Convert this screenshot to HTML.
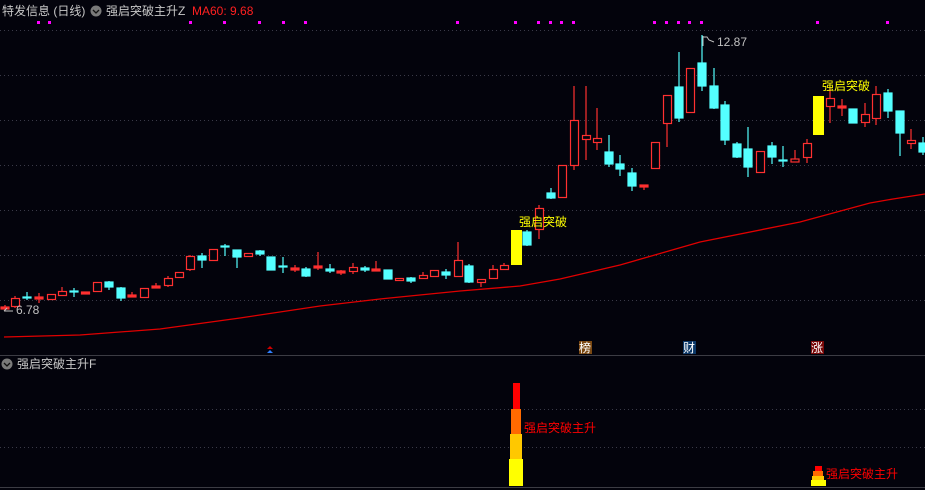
<!DOCTYPE html>
<html><head><meta charset="utf-8"><style>
html,body{margin:0;padding:0;background:#03030c;width:925px;height:490px;overflow:hidden}
svg{display:block}
text{font-family:"Liberation Sans","Noto Sans CJK SC",sans-serif}
</style></head><body>
<svg width="925" height="490" xmlns="http://www.w3.org/2000/svg">
<rect width="925" height="490" fill="#03030c"/>
<g stroke="#3a3a48" stroke-dasharray="1,3" stroke-width="1">
<line x1="0" y1="30.5" x2="925" y2="30.5"/><line x1="0" y1="75.5" x2="925" y2="75.5"/>
<line x1="0" y1="120.5" x2="925" y2="120.5"/><line x1="0" y1="165.5" x2="925" y2="165.5"/>
<line x1="0" y1="210.5" x2="925" y2="210.5"/><line x1="0" y1="255.5" x2="925" y2="255.5"/>
<line x1="0" y1="300.5" x2="925" y2="300.5"/>
<line x1="0" y1="409.5" x2="925" y2="409.5"/><line x1="0" y1="447.5" x2="925" y2="447.5"/>
</g>
<line x1="0" y1="355.5" x2="925" y2="355.5" stroke="#3c3c44"/>
<line x1="0" y1="487.5" x2="925" y2="487.5" stroke="#3c3c44"/>
<!-- magenta dots -->
<g fill="#ff00ff">
<rect x="37" y="21" width="3" height="3"/><rect x="48" y="21" width="3" height="3"/>
<rect x="189" y="21" width="3" height="3"/><rect x="223" y="21" width="3" height="3"/>
<rect x="258" y="21" width="3" height="3"/><rect x="282" y="21" width="3" height="3"/>
<rect x="304" y="21" width="3" height="3"/><rect x="456" y="21" width="3" height="3"/>
<rect x="514" y="21" width="3" height="3"/><rect x="537" y="21" width="3" height="3"/>
<rect x="549" y="21" width="3" height="3"/><rect x="560" y="21" width="3" height="3"/>
<rect x="572" y="21" width="3" height="3"/><rect x="653" y="21" width="3" height="3"/>
<rect x="665" y="21" width="3" height="3"/><rect x="677" y="21" width="3" height="3"/>
<rect x="688" y="21" width="3" height="3"/><rect x="700" y="21" width="3" height="3"/>
<rect x="816" y="21" width="3" height="3"/><rect x="886" y="21" width="3" height="3"/>
</g>
<!-- MA60 -->
<polyline fill="none" stroke="#e00000" stroke-width="1.3" points="4,337 80,335 160,329 240,318 320,306 380,299 460,291 520,286 560,279 620,265 700,242 800,222 870,203 893,199 925,194"/>
<!-- candles -->
<g stroke-width="1.2">
<g stroke="#ff3030" fill="#03030c">
<line x1="5" y1="305" x2="5" y2="311"/><rect x="1" y="307" width="8" height="2" fill="#ff3030"/>
<line x1="15" y1="296" x2="15" y2="308"/><rect x="11.5" y="298.5" width="8" height="8"/>
<line x1="39" y1="293" x2="39" y2="303"/><rect x="35" y="297" width="8" height="2" fill="#ff3030"/>
<rect x="47.5" y="294.5" width="8" height="5"/>
<line x1="62" y1="287" x2="62" y2="296"/><rect x="58.5" y="291.5" width="8" height="4"/>
<rect x="81.5" y="292" width="8" height="2" fill="#ff3030"/>
<rect x="93.5" y="282.5" width="8" height="9"/>
<line x1="132" y1="292" x2="132" y2="297"/><rect x="128" y="295" width="8" height="2" fill="#ff3030"/>
<rect x="140.5" y="288.5" width="8" height="9"/>
<line x1="156" y1="283" x2="156" y2="288"/><rect x="152" y="286" width="8" height="2" fill="#ff3030"/>
<line x1="168" y1="276" x2="168" y2="287"/><rect x="164.5" y="278.5" width="8" height="7"/>
<rect x="175.5" y="272.5" width="8" height="5"/>
<line x1="190" y1="255" x2="190" y2="271"/><rect x="186.5" y="256.5" width="8" height="13"/>
<rect x="209.5" y="249.5" width="8" height="11"/>
<rect x="244.5" y="253.5" width="8" height="3"/>
<line x1="295" y1="265" x2="295" y2="272"/><rect x="291" y="268" width="8" height="2" fill="#ff3030"/>
<line x1="318" y1="252" x2="318" y2="270"/><rect x="314" y="266" width="8" height="2" fill="#ff3030"/>
<line x1="341" y1="270" x2="341" y2="275"/><rect x="337" y="271" width="8" height="2" fill="#ff3030"/>
<line x1="353" y1="263" x2="353" y2="274"/><rect x="349.5" y="267.5" width="8" height="4"/>
<line x1="376" y1="261" x2="376" y2="271"/><rect x="372" y="269" width="8" height="2" fill="#ff3030"/>
<rect x="395.5" y="278.5" width="8" height="2"/>
<line x1="423" y1="272" x2="423" y2="279"/><rect x="419.5" y="275.5" width="8" height="3"/>
<rect x="430.5" y="270.5" width="8" height="6"/>
<line x1="458" y1="242" x2="458" y2="277"/><rect x="454.5" y="260.5" width="8" height="16"/>
<line x1="481" y1="279" x2="481" y2="287"/><rect x="477.5" y="279.5" width="8" height="3"/>
<line x1="493" y1="265" x2="493" y2="279"/><rect x="489.5" y="269.5" width="8" height="9"/>
<line x1="504" y1="263" x2="504" y2="270"/><rect x="500.5" y="265.5" width="8" height="4"/>
<line x1="539" y1="205" x2="539" y2="239"/><rect x="535.5" y="208.5" width="8" height="21"/>
<rect x="558.5" y="165.5" width="8" height="32"/>
<line x1="574" y1="86" x2="574" y2="170"/><rect x="570.5" y="120.5" width="8" height="45"/>
<line x1="586" y1="86" x2="586" y2="160"/><rect x="582.5" y="135.5" width="8" height="4"/>
<line x1="597" y1="108" x2="597" y2="150"/><rect x="593.5" y="138.5" width="8" height="4"/>
<line x1="644" y1="185" x2="644" y2="190"/><rect x="640" y="185" width="8" height="2" fill="#ff3030"/>
<rect x="651.5" y="142.5" width="8" height="26"/>
<line x1="667" y1="95" x2="667" y2="147"/><rect x="663.5" y="95.5" width="8" height="28"/>
<rect x="686.5" y="68.5" width="8" height="44"/>
<rect x="756.5" y="151.5" width="8" height="21"/>
<line x1="795" y1="150" x2="795" y2="162"/><rect x="791" y="159" width="8" height="3" />
<line x1="807" y1="139" x2="807" y2="163"/><rect x="803.5" y="143.5" width="8" height="14"/>
<line x1="830" y1="88" x2="830" y2="123"/><rect x="826.5" y="98.5" width="8" height="8"/>
<line x1="842" y1="99" x2="842" y2="116"/><rect x="838" y="106" width="8" height="2" fill="#ff3030"/>
<line x1="865" y1="103" x2="865" y2="127"/><rect x="861.5" y="114.5" width="8" height="8"/>
<line x1="876" y1="86" x2="876" y2="125"/><rect x="872.5" y="94.5" width="8" height="24"/>
<line x1="911" y1="129" x2="911" y2="149"/><rect x="907.5" y="140.5" width="8" height="3"/>
</g>
<g stroke="#54ffff" fill="#54ffff">
<line x1="27" y1="292" x2="27" y2="300"/><rect x="23" y="297" width="8" height="1"/>
<line x1="74" y1="288" x2="74" y2="297"/><rect x="70" y="291" width="8" height="1"/>
<line x1="109" y1="281" x2="109" y2="290"/><rect x="105" y="282" width="8" height="5"/>
<line x1="121" y1="287" x2="121" y2="301"/><rect x="117" y="288" width="8" height="10"/>
<line x1="202" y1="253" x2="202" y2="268"/><rect x="198" y="256" width="8" height="4"/>
<line x1="225" y1="244" x2="225" y2="256"/><rect x="221" y="246" width="8" height="1"/>
<line x1="237" y1="250" x2="237" y2="268"/><rect x="233" y="250" width="8" height="7"/>
<line x1="260" y1="250" x2="260" y2="256"/><rect x="256" y="251" width="8" height="3"/>
<rect x="267" y="257" width="8" height="13"/>
<line x1="283" y1="257" x2="283" y2="273"/><rect x="279" y="266" width="8" height="1"/>
<line x1="306" y1="267" x2="306" y2="277"/><rect x="302" y="269" width="8" height="7"/>
<line x1="330" y1="264" x2="330" y2="273"/><rect x="326" y="269" width="8" height="2"/>
<line x1="365" y1="266" x2="365" y2="272"/><rect x="361" y="268" width="8" height="2"/>
<rect x="384" y="270" width="8" height="9"/>
<line x1="411" y1="277" x2="411" y2="283"/><rect x="407" y="278" width="8" height="3"/>
<line x1="446" y1="269" x2="446" y2="279"/><rect x="442" y="272" width="8" height="3"/>
<line x1="469" y1="264" x2="469" y2="283"/><rect x="465" y="266" width="8" height="16"/>
<line x1="527" y1="230" x2="527" y2="246"/><rect x="523" y="232" width="8" height="13"/>
<line x1="551" y1="188" x2="551" y2="199"/><rect x="547" y="193" width="8" height="5"/>
<line x1="609" y1="135" x2="609" y2="167"/><rect x="605" y="152" width="8" height="12"/>
<line x1="620" y1="155" x2="620" y2="176"/><rect x="616" y="164" width="8" height="5"/>
<line x1="632" y1="168" x2="632" y2="191"/><rect x="628" y="173" width="8" height="13"/>
<line x1="679" y1="52" x2="679" y2="122"/><rect x="675" y="87" width="8" height="31"/>
<line x1="702" y1="35" x2="702" y2="91"/><rect x="698" y="63" width="8" height="23"/>
<line x1="714" y1="68" x2="714" y2="109"/><rect x="710" y="86" width="8" height="22"/>
<line x1="725" y1="101" x2="725" y2="145"/><rect x="721" y="105" width="8" height="35"/>
<line x1="737" y1="142" x2="737" y2="158"/><rect x="733" y="144" width="8" height="13"/>
<line x1="748" y1="127" x2="748" y2="177"/><rect x="744" y="149" width="8" height="18"/>
<line x1="772" y1="142" x2="772" y2="164"/><rect x="768" y="146" width="8" height="11"/>
<line x1="783" y1="146" x2="783" y2="167"/><rect x="779" y="160" width="8" height="1"/>
<rect x="849" y="109" width="8" height="14"/>
<line x1="888" y1="89" x2="888" y2="118"/><rect x="884" y="93" width="8" height="18"/>
<line x1="900" y1="111" x2="900" y2="156"/><rect x="896" y="111" width="8" height="22"/>
<line x1="923" y1="137" x2="923" y2="155"/><rect x="919" y="143" width="8" height="9"/>
</g>
<rect x="511" y="230" width="11" height="35" fill="#ffff00"/>
<rect x="813" y="96" width="11" height="39" fill="#ffff00"/>
</g>
<!-- labels -->
<text x="519" y="226" font-size="12" fill="#ffff00">强启突破</text>
<text x="822" y="90" font-size="12" fill="#ffff00">强启突破</text>
<path d="M703 46 V36 M703 37 l4 0 l2 3 l5 2" stroke="#c0c0c0" fill="none" stroke-width="1"/>
<text x="717" y="46" font-size="12" fill="#c0c0c0">12.87</text>
<path d="M4 311 H13 M4 311 l3 -3" stroke="#c0c0c0" fill="none"/>
<text x="16" y="314" font-size="12" fill="#c0c0c0">6.78</text>
<!-- header -->
<text x="2" y="15" font-size="12" fill="#c8c8c8">特发信息 (日线)</text>
<circle cx="96" cy="11" r="5.5" fill="#7a7a7a"/><path d="M93 10 l3 3 l3 -3" stroke="#111" fill="none" stroke-width="1.3"/>
<text x="106" y="15" font-size="12" fill="#c8c8c8">强启突破主升Z</text>
<text x="192" y="15" font-size="12" fill="#ff2020">MA60: 9.68</text>
<circle cx="7" cy="364" r="5.5" fill="#7a7a7a"/><path d="M4 363 l3 3 l3 -3" stroke="#111" fill="none" stroke-width="1.3"/>
<text x="17" y="368" font-size="12" fill="#c8c8c8">强启突破主升F</text>
<!-- triangle marker -->
<path d="M267 349 l3 -3 l3 3 z" fill="#d00000"/><path d="M267 353 l3 -3 l3 3 z" fill="#3080ff"/>
<!-- badges -->
<rect x="579" y="341" width="13" height="13" fill="#7a4812"/><text x="579" y="352" font-size="12" fill="#fff">榜</text>
<rect x="683" y="341" width="13" height="13" fill="#0c3868"/><text x="683" y="352" font-size="12" fill="#fff">财</text>
<rect x="811" y="341" width="13" height="13" fill="#780808"/><text x="811" y="352" font-size="12" fill="#fff">涨</text>
<!-- lower bars -->
<rect x="513" y="383" width="7" height="26" fill="#ff0000"/>
<rect x="511" y="409" width="10" height="25" fill="#ff6a00"/>
<rect x="510" y="434" width="12" height="25" fill="#ffc800"/>
<rect x="509" y="459" width="14" height="27" fill="#ffff00"/>
<text x="524" y="432" font-size="12" fill="#ff0000">强启突破主升</text>
<rect x="815" y="466" width="7" height="5" fill="#ff0000"/>
<rect x="813" y="471" width="10" height="5" fill="#ff6a00"/>
<rect x="812" y="476" width="12" height="4" fill="#ffc800"/>
<rect x="811" y="480" width="15" height="6" fill="#ffff00"/>
<text x="826" y="478" font-size="12" fill="#ff0000">强启突破主升</text>
</svg>
</body></html>
